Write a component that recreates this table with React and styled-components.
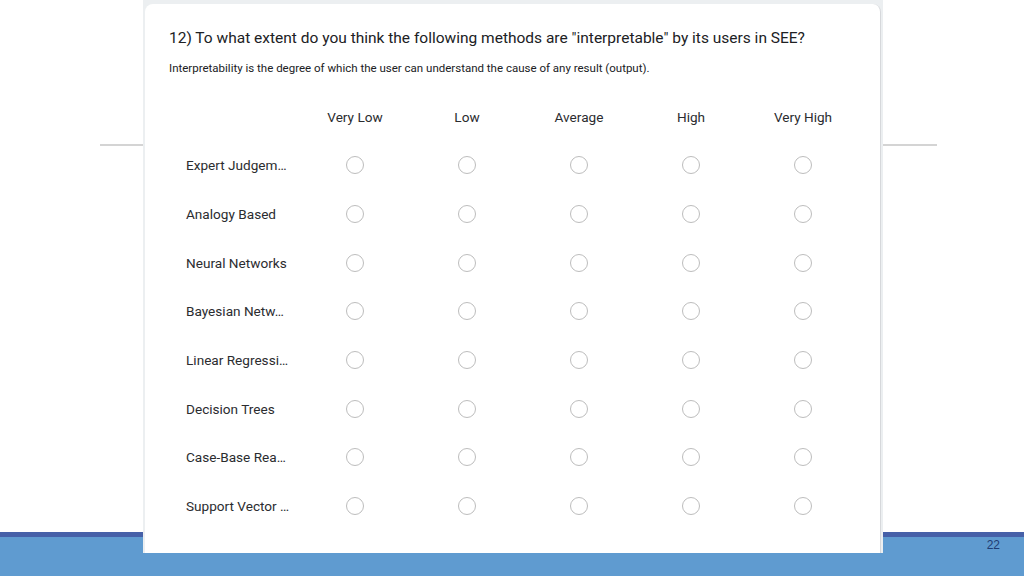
import React from "react";
import styled, { createGlobalStyle } from "styled-components";

const GlobalStyle = createGlobalStyle`
  * { box-sizing: border-box; }
  html, body { margin: 0; padding: 0; background: #ffffff; }
  body { font-family: Roboto, "Liberation Sans", sans-serif; }
`;

const levels = ["Very Low", "Low", "Average", "High", "Very High"];

// labels as the form shows them, already shortened
const methods = [
  "Expert Judgem…",
  "Analogy Based",
  "Neural Networks",
  "Bayesian Netw…",
  "Linear Regressi…",
  "Decision Trees",
  "Case-Base Rea…",
  "Support Vector …",
];

function App() {
  return (
    <>
      <GlobalStyle />
      <Slide>
        <SlideBody>
          <Rule />
        </SlideBody>
        <Band>
          <PageNumber>22</PageNumber>
        </Band>

        <Frame>
          <Card>
            <Title>
              12) To what extent do you think the following methods are
              "interpretable" by its users in SEE?
            </Title>
            <Subtitle>
              Interpretability is the degree of which the user can understand
              the cause of any result (output).
            </Subtitle>

            <Grid>
              <HeadCell />
              {levels.map((l) => (
                <HeadCell key={l}>{l}</HeadCell>
              ))}
              {methods.map((m) => (
                <React.Fragment key={m}>
                  <RowLabel>{m}</RowLabel>
                  {levels.map((l) => (
                    <Cell key={l}>
                      <Radio />
                    </Cell>
                  ))}
                </React.Fragment>
              ))}
            </Grid>
          </Card>
        </Frame>
      </Slide>
    </>
  );
}

export default App;

const Slide = styled.div`
  position: relative;
  width: 1024px;
  height: 576px;
  overflow: hidden;
  display: flex;
  flex-direction: column;
  background: #ffffff;
`;

const SlideBody = styled.div`
  flex: 1;
  padding: 144px 87px 0 100px;
`;

const Rule = styled.div`
  height: 2px;
  background: #d4d4d4;
`;

const Band = styled.div`
  height: 44px;
  background: #5f9bd0;
  border-top: 5px solid #4660a8;
  display: flex;
  justify-content: flex-end;
  padding: 1px 24px 0 0;
`;

const PageNumber = styled.span`
  font-family: "Liberation Sans", Arial, sans-serif;
  font-size: 12px;
  color: #1f3c74;
  line-height: 14px;
`;

/* screenshot of the form pasted onto the slide */
const Frame = styled.div`
  position: absolute;
  left: 143px;
  top: 0;
  width: 740px;
  height: 553px;
  background: #eceff1;
  padding: 4px 2px 0 2px;
`;

const Card = styled.div`
  height: 100%;
  background: #ffffff;
  border-radius: 8px 8px 0 0;
  border-right: 1px solid #d6d8db;
  padding: 23px 0 0 24px;
`;

const Title = styled.div`
  font-size: 15.5px;
  line-height: 22px;
  color: #202124;
`;

const Subtitle = styled.div`
  margin-top: 12px;
  font-size: 11.5px;
  line-height: 14px;
  color: #202124;
`;

const Grid = styled.div`
  margin-top: 18px;
  display: grid;
  grid-template-columns: 130px repeat(5, 112px);
  grid-template-rows: 48px;
  grid-auto-rows: 48.7px;
`;

const HeadCell = styled.div`
  display: flex;
  align-items: center;
  justify-content: center;
  font-size: 13.6px;
  color: #2b2c2f;
`;

const RowLabel = styled.div`
  padding-left: 17px;
  align-self: center;
  font-size: 13.6px;
  color: #2b2c2f;
  white-space: nowrap;
`;

const Cell = styled.div`
  display: flex;
  align-items: center;
  justify-content: center;
`;

const Radio = styled.span`
  width: 18px;
  height: 18px;
  border-radius: 50%;
  border: 1.5px solid #bdbdbd;
`;
